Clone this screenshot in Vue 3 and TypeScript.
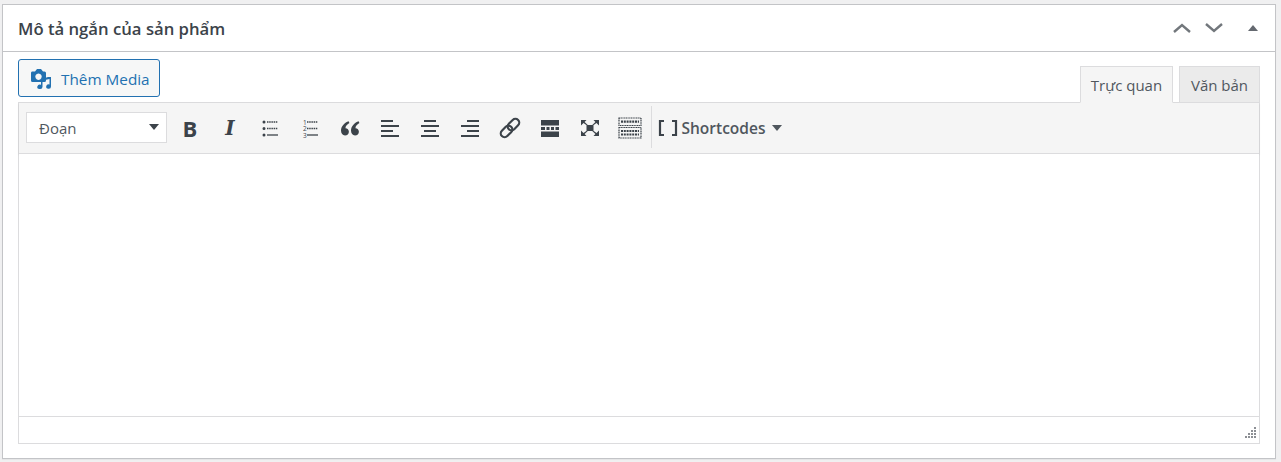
<script setup lang="ts">
interface ToolIcon {
  name: string;
  width: number;
  solid?: string;
  lines?: string;
  dashed?: string;
}

const listIcons: ToolIcon[] = [
  { name: "bullist", width: 20, solid: "M2.500 4a1.500 1.500 0 1 0 3 0a1.500 1.500 0 1 0-3 0M2.500 10.500a1.500 1.500 0 1 0 3 0a1.500 1.500 0 1 0-3 0M2.500 17a1.500 1.500 0 1 0 3 0a1.500 1.500 0 1 0-3 0", dashed: "M7 4h11M7 10.500h11", lines: "M7 17h11" },
];

const alignIcons: ToolIcon[] = [
  { name: "blockquote", width: 20, solid: "M8.600 3.200C5 4.600 1 7.700 1 12.600C1 15.400 2.600 17.600 5 17.600C7.300 17.600 8.900 16 8.900 13.800C8.900 11.700 7.400 10.200 5.500 10.200C5.300 8.300 6.900 6.300 9.400 4.900ZM18.600 3.200C15 4.600 11 7.700 11 12.600C11 15.400 12.600 17.600 15 17.600C17.300 17.600 18.900 16 18.900 13.800C18.900 11.700 17.400 10.200 15.500 10.200C15.300 8.300 16.900 6.300 19.400 4.900Z" },
  { name: "alignleft", width: 20, lines: "M1 3h12M1 8h18M1 13h12M1 18h18" },
  { name: "aligncenter", width: 20, lines: "M4 3h12M1 8h18M4 13h12M1 18h18" },
  { name: "alignright", width: 20, lines: "M7 3h12M1 8h18M7 13h12M1 18h18" },
];

const moreIcons: ToolIcon[] = [
  { name: "wp_more", width: 20, solid: "M1 2h18v5.500H1ZM1 13.500h18v5.500H1ZM1 9h4v3H1ZM6.500 9h3v3h-3ZM11 9h3v3h-3ZM15.500 9h3.500v3h-3.500Z" },
  { name: "fullscreen", width: 20, solid: "M6.500 7h7v6h-7ZM1 2h5.500L4.600 3.900L7.800 7H6.300L3.500 5L1 7.500ZM19 2h-5.500l1.900 1.900L12.200 7h1.500L16.500 5L19 7.500ZM1 18h5.500L4.600 16.100L7.800 13H6.300L3.500 15L1 12.500ZM19 18h-5.500l1.900-1.900L12.200 13h1.500l2.800 2L19 12.500Z" },
];
</script>

<template>
  <div class="page">
    <section class="postbox">
      <header class="postbox__head">
        <h2>Mô tả ngắn của sản phẩm</h2>
        <div class="postbox__actions">
          <svg width="18" height="10" viewBox="0 0 18 10"><path d="M1 9l8-7l8 7" /></svg>
          <svg width="18" height="10" viewBox="0 0 18 10"><path d="M1 1l8 7l8-7" /></svg>
          <span class="postbox__toggle"></span>
        </div>
      </header>

      <div class="postbox__body">
        <div class="editor-tools">
          <button class="media-button" type="button">
            <svg width="21" height="22" viewBox="0 0 21 22">
              <path fill-rule="evenodd" d="M1 3.500h3L6 1h4l2 2.500h1.500Q15 3.500 15 5v7.500Q15 14 13.500 14h-12Q0 14 0 12.500V5Q0 3.500 1 3.500ZM7.500 5.500a3.200 3.200 0 1 0 .01 0Z" />
              <path d="M10 13h1.500v5.800a2.600 2.200 0 1 1-1.500-2ZM17 9h3v9.500a2.400 2.200 0 1 1-1.500-2V11l-7 1.600V10.800Z" />
            </svg>
            <span>Thêm Media</span>
          </button>
          <div class="tabs">
            <button class="tab tab--active" type="button">Trực quan</button>
            <button class="tab" type="button">Văn bản</button>
          </div>
        </div>

        <div class="editor">
          <div class="toolbar">
            <div class="format-select">
              <span>Đoạn</span>
              <i class="caret"></i>
            </div>

            <div class="toolbar__buttons">
              <span class="tool tool--bold">B</span>
              <span class="tool tool--italic">I</span>

              <span v-for="icon in listIcons" :key="icon.name" class="tool">
                <svg width="20" height="20" viewBox="0 0 20 20">
                  <path :d="icon.solid" class="solid" />
                  <path :d="icon.dashed" class="dashed" />
                  <path :d="icon.lines" class="line line--thin" />
                </svg>
              </span>

              <span class="tool">
                <svg width="20" height="20" viewBox="0 0 20 20">
                  <text x="3" y="6.500" class="num">1</text>
                  <text x="3" y="13" class="num">2</text>
                  <text x="3" y="19.500" class="num">3</text>
                  <path d="M7 4h11M7 10.500h11" class="dashed" />
                  <path d="M7 17h11" class="line line--thin" />
                </svg>
              </span>

              <span v-for="icon in alignIcons" :key="icon.name" class="tool">
                <svg width="20" height="20" viewBox="0 0 20 20">
                  <path v-if="icon.solid" :d="icon.solid" class="solid" />
                  <path v-if="icon.lines" :d="icon.lines" class="line" />
                </svg>
              </span>

              <span class="tool">
                <svg width="24" height="24" viewBox="0 0 22 22">
                  <g fill="none" stroke="#3c434a" stroke-width="2" transform="rotate(-45 11 11)">
                    <rect x="0.500" y="7.500" width="12" height="7" rx="3.500" />
                    <rect x="9.500" y="7.500" width="12" height="7" rx="3.500" />
                  </g>
                </svg>
              </span>

              <span v-for="icon in moreIcons" :key="icon.name" class="tool">
                <svg width="20" height="20" viewBox="0 0 20 20">
                  <path :d="icon.solid" class="solid" />
                </svg>
              </span>

              <span class="tool">
                <svg width="24" height="22" viewBox="0 0 24 22">
                  <rect x="1" y="1" width="22" height="7.500" class="key-row" />
                  <rect x="1" y="10.500" width="22" height="10.500" class="key-row" />
                  <path d="M3 4.700h18M3 14h18M3 17.500h18" class="dashed dashed--keys" />
                </svg>
              </span>
            </div>

            <div class="toolbar__divider"></div>

            <div class="shortcodes">
              <svg width="20" height="18" viewBox="0 0 20 18">
                <path d="M6 2H2v14h4M14 2h4v14h-4" />
              </svg>
              <span>Shortcodes</span>
              <i class="caret caret--small"></i>
            </div>
          </div>

          <div class="editor__area"></div>

          <div class="editor__status">
            <svg width="14" height="14" viewBox="0 0 14 14">
              <path d="M11 1h2v2h-2zM8 4h2v2H8zM11 4h2v2h-2zM5 7h2v2H5zM8 7h2v2H8zM11 7h2v2h-2zM2 10h2v2H2zM5 10h2v2H5zM8 10h2v2H8zM11 10h2v2h-2z" />
            </svg>
          </div>
        </div>
      </div>
    </section>
  </div>
</template>

<style>
html,
body {
  background: #f0f0f1;
}
</style>

<style scoped>
.page {
  box-sizing: border-box;
  width: 1281px;
  height: 462px;
  padding: 4px 5px 0 2px;
  font-family: "Open Sans", "Noto Sans", sans-serif;
  color: #3c434a;
}

.postbox {
  box-sizing: border-box;
  height: 455px;
  background: #fff;
  border: 1px solid #c3c4c7;
  box-shadow: 0 1px 1px rgba(0, 0, 0, 0.04);
}

.postbox__head {
  box-sizing: border-box;
  height: 47px;
  display: flex;
  align-items: center;
  justify-content: space-between;
  padding: 0 17px 0 15px;
  border-bottom: 1px solid #c3c4c7;
}

.postbox__head h2 {
  margin: 0;
  font-size: 16.700px;
  font-weight: 600;
  color: #3c434a;
}

.postbox__actions {
  display: flex;
  align-items: center;
  gap: 14px;
}

.postbox__actions svg {
  fill: none;
  stroke: #72777c;
  stroke-width: 2.400;
}

.postbox__toggle {
  width: 0;
  height: 0;
  margin-left: 11px;
  border-left: 5px solid transparent;
  border-right: 5px solid transparent;
  border-bottom: 6px solid #646970;
}

.postbox__body {
  padding: 7px 15px 15px;
}

.editor-tools {
  display: flex;
  align-items: flex-end;
  justify-content: space-between;
  height: 43px;
}

.media-button {
  align-self: flex-start;
  box-sizing: border-box;
  display: flex;
  align-items: center;
  gap: 9px;
  width: 142px;
  height: 38px;
  padding: 1px 0 0 12px;
  background: #f6f7f7;
  border: 1px solid #2271b1;
  border-radius: 3px;
  font: 15.300px "Open Sans", "Noto Sans", sans-serif;
  color: #2271b1;
}

.media-button svg {
  fill: #2271b1;
  flex: none;
}

.tabs {
  display: flex;
  gap: 6px;
  position: relative;
  z-index: 1;
  margin-bottom: -1px;
}

.tab {
  box-sizing: border-box;
  height: 37px;
  padding: 0;
  width: 81px;
  background: #ebebeb;
  border: 1px solid #dcdcde;
  font: 15px "Open Sans", "Noto Sans", sans-serif;
  color: #50575e;
}

.tab--active {
  width: 93px;
  background: #f5f5f5;
  border-bottom-color: #f5f5f5;
}

.editor {
  box-sizing: border-box;
  height: 342px;
  display: flex;
  flex-direction: column;
  border: 1px solid #dcdcde;
}

.toolbar {
  box-sizing: border-box;
  height: 51px;
  flex: none;
  display: flex;
  align-items: center;
  padding: 0 0 0 7px;
  background: #f5f5f5;
  border-bottom: 1px solid #dcdcde;
  box-shadow: 0 1px 2px rgba(0, 0, 0, 0.1);
}

.format-select {
  box-sizing: border-box;
  flex: none;
  display: flex;
  align-items: center;
  justify-content: space-between;
  width: 141px;
  height: 31px;
  margin-bottom: 2px;
  padding: 2px 7px 0 12px;
  background: #fff;
  border: 1px solid #dcdcde;
  font-size: 15px;
  color: #50575e;
}

.caret {
  width: 0;
  height: 0;
  border-left: 5.500px solid transparent;
  border-right: 5.500px solid transparent;
  border-top: 6.500px solid #3c434a;
}

.format-select .caret {
  margin-top: -3px;
}

.toolbar__buttons {
  display: flex;
  align-items: center;
  margin-left: 3px;
}

.tool {
  flex: none;
  width: 40px;
  height: 34px;
  display: flex;
  align-items: center;
  justify-content: center;
}

.tool--bold {
  font-size: 22px;
  font-weight: 700;
  color: #3c434a;
}

.tool--italic {
  font-family: "DejaVu Serif", serif;
  font-size: 20px;
  font-style: italic;
  font-weight: 700;
  color: #3c434a;
}

.solid {
  fill: #3c434a;
}

.line {
  fill: none;
  stroke: #3c434a;
  stroke-width: 1.800;
}

.line--thin {
  stroke-width: 1.300;
}

.dashed {
  fill: none;
  stroke: #3c434a;
  stroke-width: 1.500;
  stroke-dasharray: 1.500 0.700;
}

.dashed--keys {
  stroke-width: 2.200;
  stroke-dasharray: 2 0.800;
}

.num {
  font-size: 6.500px;
  fill: #3c434a;
}

.key-row {
  fill: none;
  stroke: #3c434a;
  stroke-width: 1.200;
  stroke-dasharray: 1.200 0.500;
}

.toolbar__divider {
  flex: none;
  width: 1px;
  height: 42px;
  margin-bottom: 2px;
  background: #dcdcde;
  margin-left: 0.500px;
}

.shortcodes {
  display: flex;
  align-items: center;
  gap: 4px;
  margin-left: 6px;
  font-size: 15.500px;
  font-weight: 600;
  color: #50575e;
}

.shortcodes svg {
  fill: none;
  stroke: #3c434a;
  stroke-width: 2.200;
  margin-right: 0;
}

.caret--small {
  margin-left: 3px;
  border-left-width: 5px;
  border-right-width: 5px;
  border-top-width: 6px;
  border-top-color: #50575e;
}

.editor__area {
  flex: 1;
  background: #fff;
}

.editor__status {
  box-sizing: border-box;
  flex: none;
  height: 27px;
  display: flex;
  align-items: flex-end;
  justify-content: flex-end;
  padding: 0 2px 3px 0;
  border-top: 1px solid #dcdcde;
}

.editor__status svg {
  fill: #8c8f94;
}
</style>
